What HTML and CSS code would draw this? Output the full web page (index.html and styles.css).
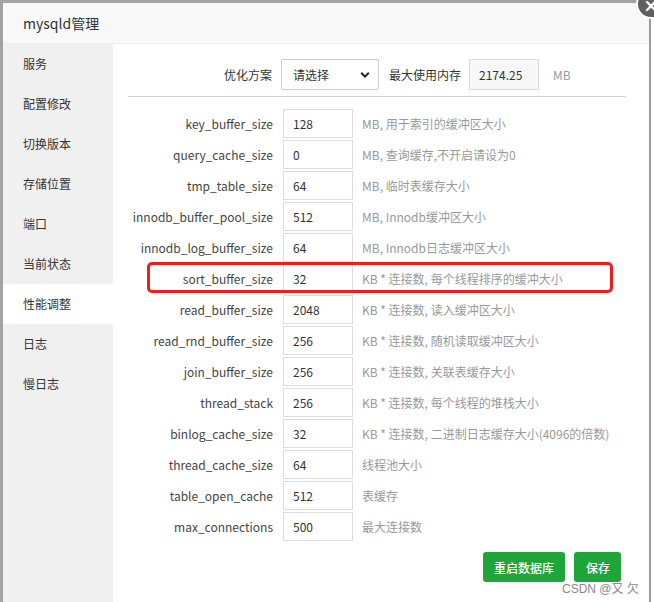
FILE: index.html
```html
<!DOCTYPE html>
<html lang="zh">
<head>
<meta charset="utf-8">
<title>mysqld管理</title>
<link rel="stylesheet" href="styles.css">
</head>
<body>
<div class="frame">
  <div class="dialog">
    <div class="titlebar">mysqld管理</div>
    <div class="main">
      <ul class="sidebar">
        <li>服务</li>
        <li>配置修改</li>
        <li>切换版本</li>
        <li>存储位置</li>
        <li>端口</li>
        <li>当前状态</li>
        <li class="active">性能调整</li>
        <li>日志</li>
        <li>慢日志</li>
      </ul>
      <div class="content">
        <div class="toprow">
          <span class="tlabel">优化方案</span>
          <div class="select"><span>请选择</span>
            <svg width="10" height="8" viewBox="0 0 10 8"><path d="M1.2 1.8 L5 5.6 L8.8 1.8" fill="none" stroke="#222" stroke-width="2"/></svg>
          </div>
          <span class="tlabel2">最大使用内存</span>
          <div class="field gray">2174.25</div>
          <span class="unit">MB</span>
        </div>
        <div class="rule"></div>
        <div class="rows">
          <div class="row"><span class="lab">key_buffer_size</span><div class="field">128</div><span class="desc">MB, 用于索引的缓冲区大小</span></div>
          <div class="row"><span class="lab">query_cache_size</span><div class="field">0</div><span class="desc">MB, 查询缓存,不开启请设为0</span></div>
          <div class="row"><span class="lab">tmp_table_size</span><div class="field">64</div><span class="desc">MB, 临时表缓存大小</span></div>
          <div class="row"><span class="lab">innodb_buffer_pool_size</span><div class="field">512</div><span class="desc">MB, Innodb缓冲区大小</span></div>
          <div class="row"><span class="lab">innodb_log_buffer_size</span><div class="field">64</div><span class="desc">MB, Innodb日志缓冲区大小</span></div>
          <div class="row"><span class="lab">sort_buffer_size</span><div class="field">32</div><span class="desc">KB * 连接数, 每个线程排序的缓冲大小</span></div>
          <div class="row"><span class="lab">read_buffer_size</span><div class="field">2048</div><span class="desc">KB * 连接数, 读入缓冲区大小</span></div>
          <div class="row"><span class="lab">read_rnd_buffer_size</span><div class="field">256</div><span class="desc">KB * 连接数, 随机读取缓冲区大小</span></div>
          <div class="row"><span class="lab">join_buffer_size</span><div class="field">256</div><span class="desc">KB * 连接数, 关联表缓存大小</span></div>
          <div class="row"><span class="lab">thread_stack</span><div class="field">256</div><span class="desc">KB * 连接数, 每个线程的堆栈大小</span></div>
          <div class="row"><span class="lab">binlog_cache_size</span><div class="field">32</div><span class="desc">KB * 连接数, 二进制日志缓存大小(4096的倍数)</span></div>
          <div class="row"><span class="lab">thread_cache_size</span><div class="field">64</div><span class="desc">线程池大小</span></div>
          <div class="row"><span class="lab">table_open_cache</span><div class="field">512</div><span class="desc">表缓存</span></div>
          <div class="row"><span class="lab">max_connections</span><div class="field">500</div><span class="desc">最大连接数</span></div>
        </div>
        <div class="actions">
          <button class="btn">重启数据库</button>
          <button class="btn">保存</button>
        </div>
      </div>
    </div>
    <div class="highlight"></div>
    <div class="watermark">CSDN @又 欠</div>
  </div>
  <div class="close">
    <svg width="12" height="12" viewBox="0 0 12 12"><path d="M2 2 L10 10 M10 2 L2 10" stroke="#fff" stroke-width="2.4" stroke-linecap="round"/></svg>
  </div>
</div>
</body>
</html>
```
FILE: styles.css
```css
* { box-sizing: border-box; }
html, body { margin: 0; padding: 0; }
body {
  background: #fff;
  font-family: "Noto Sans CJK SC", "Noto Sans", sans-serif;
  color: #333;
  width: 654px;
  height: 602px;
  overflow: hidden;
}
.frame {
  position: relative;
  width: 651px;
  height: 602px;
  border-top: 3px solid #a3a3a3;
  border-left: 3px solid #a3a3a3;
  border-right: 2px solid #9a9a9a;
}
.dialog {
  position: relative;
  width: 646px;
  height: 599px;
  background: #fff;
  display: flex;
  flex-direction: column;
}
.titlebar {
  height: 41px;
  line-height: 40px;
  padding-left: 20px;
  font-size: 14px;
  color: #333;
  background: #f8f8f8;
  border-bottom: 1px solid #eee;
}
.main {
  flex: 1;
  display: flex;
}
.sidebar {
  list-style: none;
  margin: 0;
  padding: 0;
  width: 110px;
  background: #f0f0f0;
}
.sidebar li {
  height: 40px;
  line-height: 40px;
  padding-left: 20px;
  font-size: 12px;
  color: #333;
}
.sidebar li.active { background: #fff; }
.content {
  flex: 1;
  padding: 15px 23px 0 15px;
  display: flex;
  flex-direction: column;
}
.toprow {
  display: flex;
  align-items: center;
  height: 31px;
  font-size: 12px;
}
.tlabel {
  width: 144px;
  text-align: right;
  margin-right: 9px;
}
.select {
  width: 98px;
  height: 31px;
  border: 1px solid #ccc;
  border-radius: 2px;
  display: flex;
  align-items: center;
  justify-content: space-between;
  padding: 0 8px 0 11px;
  color: #333;
}
.tlabel2 { margin: 0 8px 0 10px; }
.unit { margin-left: 14px; color: #999; }
.rule {
  height: 1px;
  background: #d4d4d4;
  margin: 6px 0 12px;
}
.rows {
  display: flex;
  flex-direction: column;
  gap: 2px;
}
.row {
  display: flex;
  align-items: center;
  height: 29px;
  font-size: 12px;
}
.lab {
  width: 145px;
  text-align: right;
  margin-right: 10px;
  color: #444;
  font-size: 12px;
}
.field {
  width: 70px;
  height: 29px;
  line-height: 27px;
  border: 1px solid #ddd;
  padding-left: 9px;
  font-size: 12px;
  color: #333;
  background: #fff;
}
.toprow .field { height: 31px; line-height: 29px; }
.field.gray { background: #f7f7f7; }
.desc {
  margin-left: 9px;
  color: #999;
}
.actions {
  display: flex;
  justify-content: flex-end;
  gap: 9px;
  margin-top: 11px;
  padding-right: 5px;
}
.btn {
  height: 30px;
  padding: 0 11px;
  border: none;
  border-radius: 3px;
  background: #20a53a;
  color: #fff;
  font-family: "Noto Sans CJK SC", sans-serif;
  font-size: 12px;
  font-weight: 500;
}
.btn:last-child { padding: 0 11px 0 12px; }
.highlight {
  position: absolute;
  left: 144px;
  top: 259px;
  width: 466px;
  height: 31px;
  border: 3px solid #ee1c1c;
  border-radius: 5px;
}
.watermark {
  position: absolute;
  left: 559px;
  top: 576px;
  font-size: 12px;
  color: #8a8a8a;
  font-family: "Liberation Sans", "Noto Sans CJK SC", sans-serif;
}
.close {
  position: absolute;
  left: 633px;
  top: -14px;
  width: 30px;
  height: 30px;
  border-radius: 50%;
  background: #5f5f5f;
  border: 2px solid #fff;
  display: flex;
  align-items: flex-end;
  justify-content: center;
  padding-bottom: 5px;
}
```
